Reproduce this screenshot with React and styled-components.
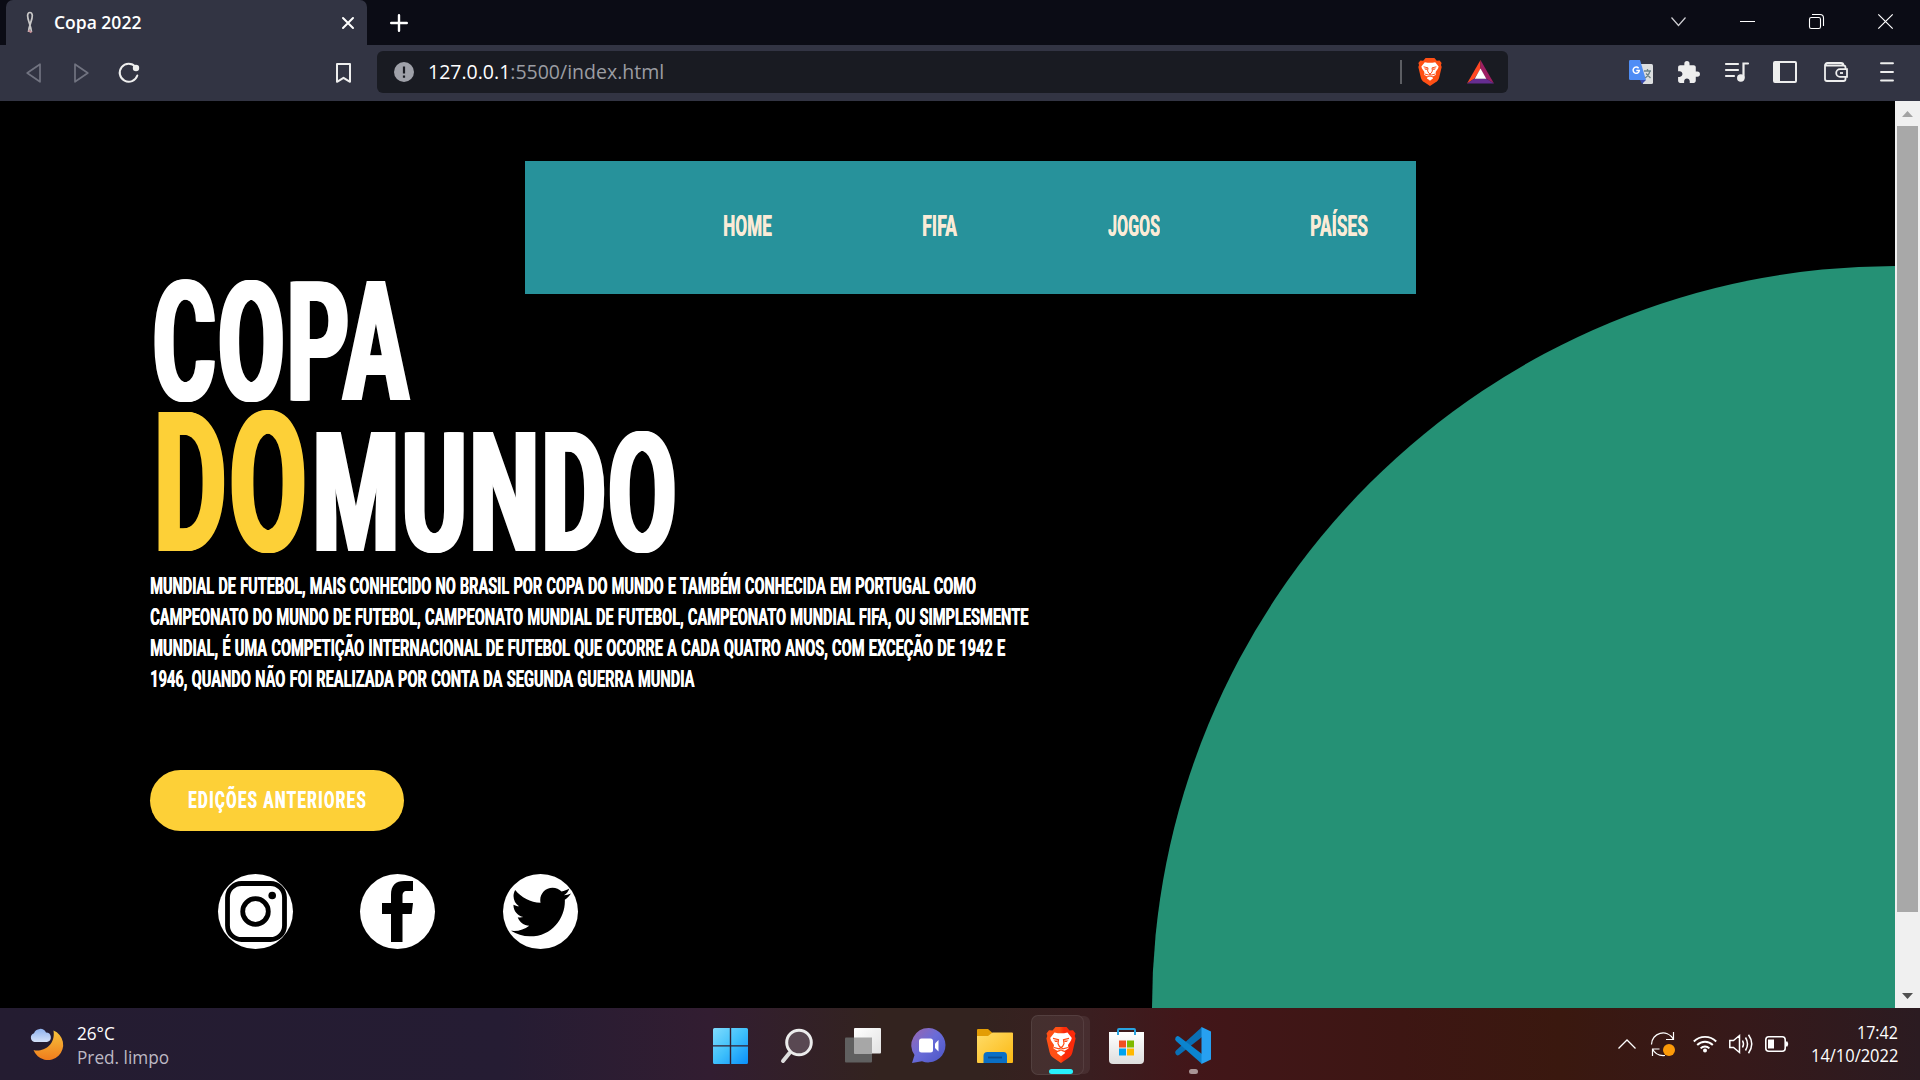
import React, { useLayoutEffect, useRef, useState } from "react";
import styled, { createGlobalStyle } from "styled-components";
import { FaTwitter } from "react-icons/fa";
import { MdExtension } from "react-icons/md";

const GlobalStyle = createGlobalStyle`
  * { box-sizing: border-box; }
  body { margin: 0; background: #000; overflow: hidden; }
  svg { display: block; flex: none; overflow: visible; }
`;

const Screen = styled.div`
  width: 1920px;
  height: 1080px;
  display: flex;
  flex-direction: column;
  overflow: hidden;
  font-family: "Open Sans", "Noto Sans", sans-serif;
`;

/* ---------- text squeezed to a given width ---------- */
const FitBox = styled.span`
  display: block;
  flex: none;
  width: ${(p) => p.$w}px;
  height: ${(p) => p.$h}px;
  line-height: ${(p) => p.$h}px;
  margin-left: ${(p) => p.$ml || 0}px;
  white-space: nowrap;
`;
const FitInner = styled.span`
  display: inline-block;
  vertical-align: top;
  transform-origin: 0 50%;
`;
function Fit({ width, height, ml, className, children }) {
  const ref = useRef(null);
  const [k, setK] = useState(1);
  useLayoutEffect(() => {
    const measure = () => ref.current && setK(width / ref.current.offsetWidth);
    measure();
    document.fonts?.ready.then(measure);
  }, [width, children]);
  return (
    <FitBox className={className} $w={width} $h={height} $ml={ml}>
      <FitInner ref={ref} style={{ transform: `scaleX(${k})` }}>{children}</FitInner>
    </FitBox>
  );
}

/* ---------- browser chrome ---------- */
const TitleBar = styled.header`
  height: 45px;
  flex: none;
  display: flex;
  background: #0b0c15;
  padding-left: 6px;
`;
const Tab = styled.div`
  width: 361px;
  height: 45px;
  display: flex;
  align-items: center;
  padding: 0 13px 0 20px;
  background: #323443;
  border-radius: 7px 7px 0 0;
`;
const TabTitle = styled(Fit)`
  font-size: 17.5px;
  font-weight: 600;
  color: #fff;
  margin-bottom: 2px;
`;
const Push = styled.span`
  flex: 1;
`;
const TitleRow = styled.div`
  flex: 1;
  display: flex;
  align-items: flex-start;
  padding: 14px 27px 0 23px;
`;
const WindowButtons = styled.div`
  display: flex;
  gap: 54px;
  align-items: flex-start;
`;
const Toolbar = styled.div`
  height: 56px;
  flex: none;
  display: flex;
  align-items: center;
  padding: 0 26px 2px;
  background: #323443;
`;
const NavIcons = styled.div`
  display: flex;
  align-items: center;
  width: 351px;
  padding-top: 2px;
`;
const AddressBar = styled.div`
  width: 1131px;
  height: 42px;
  display: flex;
  align-items: center;
  padding: 0 14px 0 17px;
  background: #191b22;
  border-radius: 6px;
`;
const Url = styled(Fit)`
  font-size: 20px;
  color: #9b9da3;
  b { font-weight: 400; color: #fff; }
`;
const Divider = styled.span`
  width: 2px;
  height: 24px;
  background: #5c5e63;
  margin-right: 16px;
`;
const Extensions = styled.div`
  display: flex;
  align-items: center;
  padding-left: 121px;
`;
const IconSlot = styled.span`
  display: flex;
  margin-left: ${(p) => p.$ml || 0}px;
`;

/* ---------- page ---------- */
const Viewport = styled.div`
  height: 907px;
  flex: none;
  display: flex;
  background: #000;
`;
const Page = styled.main`
  width: 1895px;
  height: 907px;
  display: grid;
  overflow: hidden;
`;
const Quarter = styled.div`
  grid-area: 1 / 1;
  justify-self: end;
  align-self: end;
  width: 743px;
  height: 742px;
  background: #259175;
  border-radius: 100% 0 0 0;
`;
const Content = styled.div`
  grid-area: 1 / 1;
  padding: 60px 0 0 150px;
  font-family: Roboto, "Liberation Sans", sans-serif;
  color: #fff;
`;
const Menu = styled.nav`
  margin-left: 375px;
  width: 891px;
  height: 133px;
  padding: 0 0 3px 198px;
  display: flex;
  align-items: center;
  background: #27929b;
`;
const MenuLink = styled(Fit)`
  font-size: 29.8px;
  font-weight: 700;
  letter-spacing: 0.01em;
  color: #faebd7;
  text-shadow: 0.7px 0 currentColor;
`;
const Title = styled.h1`
  margin: -10px 0 0;
  font-size: 100%;
  display: grid;
  row-gap: 12px;
`;
const TitleLine = styled.div`
  display: flex;
  align-items: flex-end;
`;
const TitleWord = styled(Fit)`
  font-size: ${(p) => p.height / 0.711}px;
  font-weight: 700;
  letter-spacing: 0.03em;
  color: ${(p) => (p.$accent ? "#fdd037" : "#fff")};
  text-shadow: -4.500px 0 currentColor, -2.500px 0 currentColor, 2.500px 0 currentColor, 4.500px 0 currentColor;
`;
const Paragraph = styled.div`
  margin-top: 16px;
`;
const Line = styled(Fit)`
  font-size: 24.5px;
  font-weight: 700;
  word-spacing: 0.04em;
  text-shadow: 0.7px 0 currentColor;
`;
const Button = styled.a`
  margin-top: 76px;
  width: 254px;
  height: 61px;
  padding: 0 0 1px 38px;
  display: flex;
  align-items: center;
  border-radius: 31px;
  background: #fdd037;
`;
const ButtonText = styled(Fit)`
  font-size: 24.3px;
  font-weight: 700;
  letter-spacing: 0.1em;
  text-shadow: 0.7px 0 currentColor;
`;
const Social = styled.div`
  margin: 43px 0 0 68px;
  display: flex;
  gap: 67px;
`;
const Disc = styled.a`
  width: 75px;
  height: 75px;
  display: flex;
  align-items: center;
  justify-content: center;
  border-radius: 50%;
  background: #fff;
  color: #000;
  &:last-child { margin-left: 1px; }
`;
const ScrollBar = styled.div`
  width: 25px;
  display: flex;
  flex-direction: column;
  align-items: center;
  justify-content: space-between;
  padding: 10px 0 9px;
  background: #f0f0f0;
`;
const Thumb = styled.div`
  width: 21px;
  height: 786px;
  margin: 9px 0 auto;
  background: #a8a8a8;
`;

/* ---------- taskbar ---------- */
const Taskbar = styled.footer`
  height: 72px;
  flex: none;
  display: flex;
  align-items: center;
  padding: 1px 22px 0 30px;
  color: #fff;
  background: linear-gradient(90deg, #241c31 0, #251c33 500px, #321d31 710px, #33231f 880px, #33231f 980px, #3a1e20 1090px, #421619 1190px, #3d1613 1400px, #3a180f 1560px, #36191a 1740px, #2b1b21 1920px);
`;
const Stack = styled.div`
  display: flex;
  flex-direction: column;
`;
const Weather = styled.div`
  display: flex;
  align-items: center;
  gap: 13px;
  width: 677px;
`;
const Small = styled(Fit)`
  font-size: 17.6px;
  color: ${(p) => p.$color || "#fff"};
`;
const Apps = styled.div`
  display: flex;
  align-items: center;
`;
const AppSlot = styled.div`
  width: ${(p) => p.$w}px;
  height: 60px;
  display: flex;
  flex-direction: column;
  align-items: center;
  padding-top: ${(p) => p.$pt || 13}px;
  margin-left: ${(p) => p.$ml}px;
`;
const ActiveApp = styled(AppSlot)`
  padding-left: 6px;
  border-radius: 7px;
  background: #ffffff12;
  border: 1px solid #ffffff14;
  box-shadow: 7px 0 0 -1px #ffffff12;
`;
const Indicator = styled.span`
  width: ${(p) => p.$w}px;
  height: 5px;
  flex: none;
  border-radius: 3px;
  margin-top: ${(p) => p.$mt}px;
  background: ${(p) => p.$c};
`;
const Tray = styled.div`
  display: flex;
  align-items: center;
  flex: 1;
  padding: 0 0 2px 407px;
`;
const Clock = styled(Stack)`
  align-items: flex-end;
  margin-left: 22px;
`;

const Brave = ({ w, h, id }) => (
  <svg width={w} height={h} viewBox="0 0 30 36" preserveAspectRatio="none">
    <defs>
      <linearGradient id={id} x1="0" x2="1">
        <stop offset=".45" stopColor="#ff5015" />
        <stop offset=".6" stopColor={id === "bt" ? "#fb2a0a" : "#ff5015"} />
      </linearGradient>
    </defs>
    <path d="M9.500 0H20.500L23.500 3.500 27 3.300 29.500 6.500 28.700 9 29.600 11.500 26.500 25C25.800 28 24.500 29.600 22 31.300L15 36 8 31.300C5.500 29.600 4.200 28 3.500 25L.4 11.500 1.300 9 .5 6.500 3 3.300 6.500 3.500Z" fill={`url(#${id})`} />
    <path d="M8.500 5.500L12 6.200H18L21.500 5.500 25.800 11 25 13.500 22 18 22.500 21.500 17.500 24.500 15 23.300 12.500 24.500 7.500 21.500 8 18 5 13.500 4.200 11Z" fill="#fff" />
    <path d="M11 25.200L15 23.800 19 25.200 18.500 26.500 15 29.300 11.500 26.500Z" fill="#fff" />
    <path d="M7 11.300L12.500 12.700 12 16.700 13.500 19.500 15 20.500 16.500 19.500 18 16.700 17.500 12.700 23 11.300M8 20.500L13 21.800 15 20.700 17 21.800 22 20.500M10.500 24.700L15 22.800 19.500 24.700" fill="none" stroke="#ff4a12" strokeWidth="1.200" />
    <path d="M7.500 13.500H12L11.500 15H9.500ZM22.500 13.500H18L18.500 15H20.500Z" fill="#ff4a12" />
  </svg>
);

export default function App() {
  return (
    <Screen>
      <GlobalStyle />
      <TitleBar>
        <Tab>
          <svg width="8" height="23" viewBox="0 0 8 23" fill="none">
            <path d="M2.500 21C3 14 6.500 9 6.300 4.500 6 .5 1.800.5 1.600 4.500 1.500 9 4.800 14 5.500 21" stroke="#c9c8c8" strokeWidth="1.700" />
            <path d="M2.500 19.500L5.500 21.500" stroke="#c78f96" strokeWidth="2" />
          </svg>
          <TabTitle width={87} height={24} ml={20}>Copa 2022</TabTitle>
          <Push />
          <svg width="12" height="12" viewBox="0 0 12 12" stroke="#fff" strokeWidth="2" strokeLinecap="round"><path d="M1 1L11 11M11 1L1 11" /></svg>
        </Tab>
        <TitleRow>
          <svg width="18" height="18" viewBox="0 0 18 18" stroke="#fff" strokeWidth="2.400" strokeLinecap="round"><path d="M9 1.200V16.800M1.200 9H16.800" /></svg>
          <Push />
          <WindowButtons>
            <svg width="15" height="15" viewBox="0 0 15 15" fill="none" stroke="#cfcfd3" strokeWidth="1.200"><path d="M.5 3.500L7.500 11.500 14.500 3.500" /></svg>
            <svg width="15" height="15" viewBox="0 0 15 15" stroke="#fff"><path d="M0 7.500H15" /></svg>
            <svg width="15" height="15" viewBox="0 0 15 15" fill="none" stroke="#fff" strokeWidth="1.100"><rect x=".5" y="3.500" width="11" height="11" rx="1.800" /><path d="M3 .5H11Q14.500.5 14.500 4V12" /></svg>
            <svg width="15" height="15" viewBox="0 0 15 15" stroke="#fff" strokeWidth="1.200"><path d="M.3.3L14.700 14.700M14.700.3L.3 14.700" /></svg>
          </WindowButtons>
        </TitleRow>
      </TitleBar>

      <Toolbar>
        <NavIcons>
          <svg width="15" height="20" viewBox="0 0 15 20" fill="none" stroke="#717380" strokeWidth="1.700" strokeLinejoin="round"><path d="M14 1.200V18.800L1.200 10Z" /></svg>
          <IconSlot $ml={33}>
            <svg width="15" height="20" viewBox="0 0 15 20" fill="none" stroke="#717380" strokeWidth="1.700" strokeLinejoin="round"><path d="M1 1.200V18.800L13.800 10Z" /></svg>
          </IconSlot>
          <IconSlot $ml={30}>
            <svg width="21" height="20" viewBox="0 0 21 20" fill="none">
              <path d="M16.500 3.800A9 9 0 1 0 18.300 12.500" stroke="#eee" strokeWidth="2" strokeLinecap="round" />
              <circle cx="17" cy="5" r="3.200" fill="#eee" />
            </svg>
          </IconSlot>
          <IconSlot $ml={196}>
            <svg width="15" height="20" viewBox="0 0 15 20" fill="none" stroke="#eee" strokeWidth="2" strokeLinejoin="round"><path d="M1 1H14V18.800L7.500 14.800 1 18.800Z" /></svg>
          </IconSlot>
        </NavIcons>
        <AddressBar>
          <svg width="20" height="20" viewBox="0 0 20 20"><circle cx="10" cy="10" r="10" fill="#9fa1a9" /><path d="M10 4.500V11.500M10 13.500V15.700" stroke="#191b22" strokeWidth="2.200" /></svg>
          <Url width={236} height={28} ml={14}><b>127.0.0.1</b>:5500/index.html</Url>
          <Push />
          <Divider />
          <Brave w={24} h={28} id="bu" />
          <IconSlot $ml={25}>
            <svg width="27" height="24" viewBox="0 0 27 24">
              <path d="M13.500 0L0 23.500 7.500 18.500 13.500 9Z" fill="#ff4724" />
              <path d="M13.500 0L27 23.500 19 18.500 13.500 9Z" fill="#9e1f63" />
              <path d="M0 23.500H27L19 18.500H7.500Z" fill="#662d91" />
              <path d="M13.500 8.500L19.300 18.700H7.700Z" fill="#fff" />
            </svg>
          </IconSlot>
        </AddressBar>
        <Extensions>
          <svg width="24" height="24" viewBox="0 0 24 24">
            <path d="M10 4H22.500Q24 4 24 5.500V22.500Q24 24 22.500 24H14Z" fill="#dcdee0" />
            <path d="M11 20H17L13 24Z" fill="#3949ab" />
            <path d="M1.200 0H11L17 20H1.200Q0 20 0 18.800V1.200Q0 0 1.200 0Z" fill="#4f8df5" />
            <path d="M15 11H22M18.500 9V11M21 11Q19.500 16 16 18M17 13.500L21.500 18" stroke="#6b8388" strokeWidth="1.300" fill="none" />
            <path d="M9.600 8.200A3.100 3.100 0 1 0 10.300 10.500H7.300" stroke="#fff" strokeWidth="1.500" fill="none" />
          </svg>
          <IconSlot $ml={23}><MdExtension size={25} color="#eee" /></IconSlot>
          <IconSlot $ml={24}>
            <svg width="24" height="20" viewBox="0 0 24 20" fill="none" stroke="#eee" strokeWidth="2.200" strokeLinecap="round">
              <path d="M1 2H13M1 8H13M1 14H9" /><path d="M23 1.500H18.500V16" /><circle cx="15.800" cy="16" r="3" fill="#eee" strokeWidth="1.500" />
            </svg>
          </IconSlot>
          <IconSlot $ml={24}>
            <svg width="24" height="22" viewBox="0 0 24 22"><rect x="1" y="1" width="22" height="20" rx="1" fill="none" stroke="#eee" strokeWidth="2" /><path d="M1 1H7V21H1Z" fill="#eee" /></svg>
          </IconSlot>
          <IconSlot $ml={27}>
            <svg width="24" height="20" viewBox="0 0 24 20" fill="none" stroke="#eee" strokeWidth="1.800">
              <path d="M21.500 7V5.500Q21.500 3.500 19.500 3.500H1V17Q1 19 3 19H19.500Q21.500 19 21.500 17V15M1 4Q1 1 3.500 1H17Q19.500 1 19.500 3.500" />
              <path d="M23 7.200H16A3.800 3.800 0 0 0 16 14.800H23Z" /><path d="M16 11H19" />
            </svg>
          </IconSlot>
          <IconSlot $ml={32}>
            <svg width="14" height="20" viewBox="0 0 14 20" stroke="#eee" strokeWidth="1.900" strokeLinecap="round"><path d="M1 1.300H13M1 10H13M1 18.500H13" /></svg>
          </IconSlot>
        </Extensions>
      </Toolbar>

      <Viewport>
        <Page>
          <Quarter />
          <Content>
            <Menu>
              <MenuLink width={49} height={30}>HOME</MenuLink>
              <MenuLink width={35} height={30} ml={150}>FIFA</MenuLink>
              <MenuLink width={52} height={30} ml={151}>JOGOS</MenuLink>
              <MenuLink width={58} height={30} ml={150}>PAÍSES</MenuLink>
            </Menu>
            <Title>
              <TitleLine><TitleWord width={258} height={119} ml={3}>COPA</TitleWord></TitleLine>
              <TitleLine>
                <TitleWord width={156} height={139} ml={4} $accent>DO</TitleWord>
                <TitleWord width={366} height={119} ml={3}>MUNDO</TitleWord>
              </TitleLine>
            </Title>
            <Paragraph>
              <Line width={826} height={31}>MUNDIAL DE FUTEBOL, MAIS CONHECIDO NO BRASIL POR COPA DO MUNDO E TAMBÉM CONHECIDA EM PORTUGAL COMO</Line>
              <Line width={878} height={31}>CAMPEONATO DO MUNDO DE FUTEBOL, CAMPEONATO MUNDIAL DE FUTEBOL, CAMPEONATO MUNDIAL FIFA, OU SIMPLESMENTE</Line>
              <Line width={855} height={31}>MUNDIAL, É UMA COMPETIÇÃO INTERNACIONAL DE FUTEBOL QUE OCORRE A CADA QUATRO ANOS, COM EXCEÇÃO DE 1942 E</Line>
              <Line width={544} height={31}>1946, QUANDO NÃO FOI REALIZADA POR CONTA DA SEGUNDA GUERRA MUNDIA</Line>
            </Paragraph>
            <Button><ButtonText width={179} height={30}>EDIÇÕES ANTERIORES</ButtonText></Button>
            <Social>
              <Disc>
                <svg width="62" height="61" viewBox="0 0 62 61" fill="none" stroke="#000">
                  <rect x="2.500" y="2.500" width="57" height="56" rx="14" strokeWidth="4.800" />
                  <circle cx="30.500" cy="30.500" r="12.800" strokeWidth="4.800" />
                  <circle cx="47.200" cy="14.500" r="3.800" fill="#000" stroke="none" />
                </svg>
              </Disc>
              <Disc>
                <svg width="31" height="61" viewBox="0 0 31 61"><path d="M9 61V33H0V22H9V14C9 4 14 0 22 0H31V10H25C21.500 10 20.500 12 20.500 15V22H31L29.700 33H20.500V61Z" /></svg>
              </Disc>
              <Disc><FaTwitter size={60} /></Disc>
            </Social>
          </Content>
        </Page>
        <ScrollBar>
          <svg width="11" height="6" viewBox="0 0 11 6"><path d="M0 6L5.500 0 11 6Z" fill="#a3a3a3" /></svg>
          <Thumb />
          <svg width="11" height="6" viewBox="0 0 11 6"><path d="M0 0L5.500 6 11 0Z" fill="#505050" /></svg>
        </ScrollBar>
      </Viewport>

      <Taskbar>
        <Weather>
          <svg width="34" height="33" viewBox="0 0 34 33">
            <defs>
              <linearGradient id="moon" x1="0" x2="0" y1="0" y2="1"><stop offset="0" stopColor="#f7c33c" /><stop offset="1" stopColor="#f07c1c" /></linearGradient>
              <linearGradient id="cloud" x1="0" x2="0" y1="0" y2="1"><stop offset="0" stopColor="#8fb2ee" /><stop offset="1" stopColor="#d5e2fa" /></linearGradient>
            </defs>
            <path d="M23.500 2.500A15.300 15.300 0 1 1 3.500 22C12 24.500 26 18 23.500 2.500Z" fill="url(#moon)" />
            <path d="M4.500 14A4.500 4.500 0 0 1 4 5.300 6.500 6.500 0 0 1 16 4.500 4.800 4.800 0 0 1 17 14Z" fill="url(#cloud)" />
          </svg>
          <Stack>
            <Small width={38} height={24}>26°C</Small>
            <Small width={92} height={24} $color="#bdb9c4">Pred. limpo</Small>
          </Stack>
        </Weather>
        <Apps>
          <AppSlot $w={35} $ml={6}>
            <svg width="35" height="36" viewBox="0 0 35 36">
              <defs><linearGradient id="win" x1="0" y1="0" x2="1" y2="1"><stop offset="0" stopColor="#80dcfd" /><stop offset=".5" stopColor="#3fc0fb" /><stop offset="1" stopColor="#0a8ffb" /></linearGradient></defs>
              <path d="M1.500 0H16.800V17.200H0V1.500Q0 0 1.500 0ZM18.200 0H33.500Q35 0 35 1.500V17.200H18.200ZM0 18.600H16.800V36H1.500Q0 36 0 34.500ZM18.200 18.600H35V34.500Q35 36 33.500 36H18.200Z" fill="url(#win)" />
            </svg>
          </AppSlot>
          <AppSlot $w={32} $ml={33}>
            <svg width="32" height="35" viewBox="0 0 32 35"><path d="M8.500 25L2 33" stroke="#dcdcdc" strokeWidth="4" strokeLinecap="round" /><circle cx="18" cy="14.500" r="12.300" fill="#594852" stroke="#ececec" strokeWidth="3" /></svg>
          </AppSlot>
          <AppSlot $w={36} $ml={32}>
            <svg width="36" height="35" viewBox="0 0 36 35">
              <defs><linearGradient id="tv" x1="0" y1="0" x2="1" y2="1"><stop offset="0" stopColor="#fff" /><stop offset="1" stopColor="#e2e2e2" /></linearGradient></defs>
              <rect y="9.500" width="27" height="25" rx="1" fill="#606060" /><rect x="9" width="27" height="25.500" rx="1" fill="url(#tv)" /><path d="M9 9.500H27V25.500H9Z" fill="#a7a7a7" />
            </svg>
          </AppSlot>
          <AppSlot $w={34} $ml={31}>
            <svg width="34" height="35" viewBox="0 0 34 35">
              <defs><linearGradient id="chat" x1="0" y1=".2" x2=".8" y2="1"><stop offset="0" stopColor="#9067b6" /><stop offset=".45" stopColor="#6a6cd8" /><stop offset="1" stopColor="#5059c9" /></linearGradient></defs>
              <path d="M17 0A17.200 17.200 0 1 1 10 33.200L0 35 2.500 27A17.200 17.200 0 0 1 17 0Z" fill="url(#chat)" />
              <rect x="7" y="10.500" width="14" height="14" rx="2.500" fill="#fff" /><path d="M23 15.500L26.500 12V23.500L23 20Z" fill="#fff" />
            </svg>
          </AppSlot>
          <AppSlot $w={36} $ml={31} $pt={14}>
            <svg width="36" height="34" viewBox="0 0 36 34">
              <defs><linearGradient id="fold" x1="0" y1="0" x2="1" y2="1"><stop offset="0" stopColor="#ffdc68" /><stop offset="1" stopColor="#fcb913" /></linearGradient></defs>
              <path d="M0 1Q0 0 1 0H11L15 3.500V8H0Z" fill="#e39d05" /><path d="M0 7H11L15.500 3.500H35Q36 3.500 36 4.500V33Q36 34 35 34H1Q0 34 0 33Z" fill="url(#fold)" />
              <path d="M6.500 34V27Q6.500 23 10.500 23H26.500Q30 23 30 27V34Z" fill="#0a6fc5" /><path d="M11 28.500H25" stroke="#0a4c8c" strokeWidth="1.800" />
            </svg>
          </AppSlot>
          <ActiveApp $w={53} $ml={18} $pt={11}>
            <Brave w={30} h={36} id="bt" />
            <Indicator $w={24} $mt={6} $c="#28f0fb" />
          </ActiveApp>
          <AppSlot $w={35} $ml={25} $pt={13}>
            <svg width="35" height="36" viewBox="0 0 35 36">
              <defs><linearGradient id="store" x1="0" y1="0" x2="0" y2="1"><stop offset="0" stopColor="#fff" /><stop offset="1" stopColor="#dedede" /></linearGradient></defs>
              <path d="M0 4H35V32Q35 36 31 36H4Q0 36 0 32Z" fill="url(#store)" />
              <path d="M9 7V2Q9 1 10 1H25Q26 1 26 2V7" fill="none" stroke="#29a3e0" strokeWidth="2" />
              <path d="M10 12.500H17V19.500H10Z" fill="#f05022" /><path d="M18 12.500H25V19.500H18Z" fill="#7fba00" /><path d="M10 20.500H17V27.500H10Z" fill="#00a3ee" /><path d="M18 20.500H25V27.500H18Z" fill="#ffb800" />
            </svg>
          </AppSlot>
          <AppSlot $w={36} $ml={31} $pt={12}>
            <svg width="36" height="37" viewBox="0 0 36 37">
              <path d="M27 0V10L4 28Q2.500 29 1 27.500L.5 26.500Q-.5 25 1 23.500Z" fill="#0a6fb5" />
              <path d="M27 37V27L4 9.500Q2.500 8.500 1 10L.5 10.800Q-.5 12.500 1 14Z" fill="#0b84cf" />
              <path d="M26.500 0L36 4.500V32.500L26.500 37Z" fill="#27a0f0" />
            </svg>
            <Indicator $w={9} $mt={5} $c="#a99596" />
          </AppSlot>
        </Apps>
        <Tray>
          <svg width="18" height="10" viewBox="0 0 18 10" fill="none" stroke="#fff" strokeWidth="1.300"><path d="M.5 9.500L9 1 17.500 9.500" /></svg>
          <IconSlot $ml={15}>
            <svg width="24" height="24" viewBox="0 0 24 24" fill="none" stroke="#fff" strokeWidth="1.200">
              <path d="M.5 12.500C.5 1 16-4 22.500 7.500M22.500 0V7.500H15M1.500 24V17H8.500M1.500 17C4 22 9 24 14 23.500" /><circle cx="18" cy="18" r="6" fill="#fd9a09" stroke="none" />
            </svg>
          </IconSlot>
          <IconSlot $ml={18}>
            <svg width="24" height="18" viewBox="0 0 24 18" fill="none" stroke="#fff" strokeWidth="1.900">
              <path d="M.8 6.500A15.800 15.800 0 0 1 23.200 6.500M4.200 10A11 11 0 0 1 19.800 10M7.600 13.300A6.200 6.200 0 0 1 16.400 13.300" /><circle cx="12" cy="15.500" r="2" fill="#fff" stroke="none" />
            </svg>
          </IconSlot>
          <IconSlot $ml={12}>
            <svg width="24" height="20" viewBox="0 0 24 20" fill="none" stroke="#fff" strokeWidth="1.500">
              <path d="M.8 6.500H4.500L10.500 1.500V18.500L4.500 13.500H.8ZM13.500 6.500Q15.500 10 13.500 13.500M16.500 3.500Q20.500 10 16.500 16.500M19.500.8Q26 10 19.500 19.200" />
            </svg>
          </IconSlot>
          <IconSlot $ml={12}>
            <svg width="24" height="16" viewBox="0 0 24 16" fill="none" stroke="#fff" strokeWidth="1.600">
              <rect x=".8" y=".8" width="19.400" height="14.400" rx="3" /><path d="M3 3.500H9V12.500H3Z" fill="#fff" stroke="none" /><path d="M21 5.500H22.500Q24 8 22.500 10.500H21Z" fill="#fff" stroke="none" />
            </svg>
          </IconSlot>
          <Clock>
            <Small width={41} height={23}>17:42</Small>
            <Small width={87} height={23}>14/10/2022</Small>
          </Clock>
        </Tray>
      </Taskbar>
    </Screen>
  );
}
